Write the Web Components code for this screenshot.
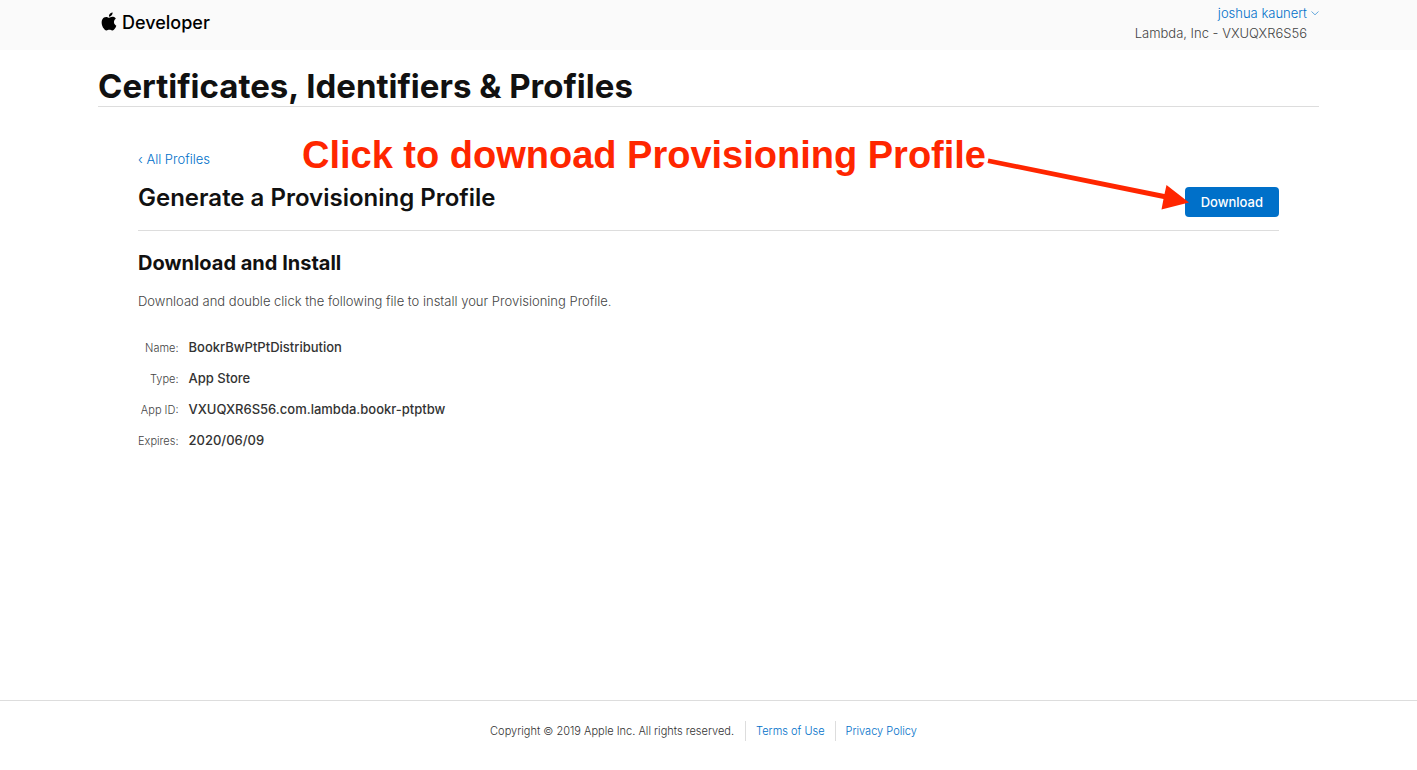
<!DOCTYPE html>
<html lang="en">
<head>
<meta charset="utf-8">
<title>Certificates, Identifiers &amp; Profiles - Apple Developer</title>
<style>
  html { --blue: #0070c9; --line: #ddd; --gutter: 98px; }
  body { margin: 0; background: #fff; color: #333; font: 13px/20px Inter, "Liberation Sans", sans-serif; }
</style>
</head>
<body>
<dev-page>
  <dev-header slot="header" user="joshua kaunert" team="Lambda, Inc - VXUQXR6S56"></dev-header>
  <page-title>Certificates, Identifiers &amp; Profiles</page-title>
  <profile-panel heading="Generate a Provisioning Profile">
    <callout-note slot="note">Click to downoad Provisioning Profile</callout-note>
    <profile-details></profile-details>
  </profile-panel>
  <dev-footer slot="footer"></dev-footer>
</dev-page>
<script>
  function define(name, markup, setup) {
    const template = document.createElement('template');
    template.innerHTML = markup;
    customElements.define(name, class extends HTMLElement {
      connectedCallback() {
        if (this.shadowRoot) return;
        this.attachShadow({ mode: 'open' }).append(template.content.cloneNode(true));
        if (setup) setup(this, this.shadowRoot);
      }
    });
  }

  define('dev-page', `
    <style>
      :host { display: flex; flex-direction: column; min-height: 100vh; }
      main { flex: 1; padding: 16px var(--gutter) 0; }
    </style>
    <slot name="header"></slot>
    <main><slot></slot></main>
    <slot name="footer"></slot>`);

  define('dev-header', `
    <style>
      :host { display: flex; justify-content: space-between; box-sizing: border-box; min-height: 50px; padding: 3px var(--gutter) 0; background: #fafafa; }
      a { color: var(--blue); text-decoration: none; }
      .logo { display: flex; gap: 4px; align-items: center; height: 40px; padding-left: 2px; color: #000; font-size: 18px; font-weight: 500; }
      .logo svg { width: 18px; height: 19px; margin-bottom: 4px; }
      .account { text-align: right; font-weight: 300; }
      .account button { display: flex; align-items: center; gap: 4px; margin-left: auto; padding: 0; border: 0; background: none; color: var(--blue); font: inherit; cursor: pointer; }
      .account svg { width: 8px; height: 6px; }
      .team { padding-right: 12px; color: #444; }
    </style>
    <a class="logo" href="#" aria-label="Apple Developer">
      <svg viewBox="0 0 24 24" fill="currentColor" aria-hidden="true"><path d="M12.152 6.896c-.948 0-2.415-1.078-3.96-1.04-2.04.027-3.91 1.183-4.961 3.014-2.117 3.675-.546 9.103 1.519 12.09 1.013 1.454 2.208 3.09 3.792 3.039 1.52-.065 2.09-.987 3.935-.987 1.831 0 2.35.987 3.96.948 1.637-.026 2.676-1.48 3.676-2.948 1.156-1.688 1.636-3.325 1.662-3.415-.039-.013-3.182-1.221-3.22-4.857-.026-3.04 2.48-4.494 2.597-4.559-1.429-2.09-3.623-2.324-4.39-2.376-2-.156-3.675 1.09-4.61 1.09zM15.53 3.83c.843-1.012 1.4-2.427 1.245-3.83-1.207.052-2.662.805-3.532 1.818-.78.896-1.454 2.338-1.273 3.714 1.338.104 2.715-.688 3.559-1.701"/></svg>
      <span>Developer</span>
    </a>
    <div class="account">
      <button type="button"><span class="user"></span><svg viewBox="0 0 8 6" fill="none" stroke="#68aadd" aria-hidden="true"><path d="M.5 1.500 4 4.800 7.500 1.500"/></svg></button>
      <div class="team"></div>
    </div>`, (host, root) => {
      root.querySelector('.user').textContent = host.getAttribute('user');
      root.querySelector('.team').textContent = host.getAttribute('team');
    });

  define('page-title', `
    <style>
      :host { display: block; border-bottom: 1px solid var(--line); }
      h1 { margin: 0; color: #111; font-size: 33px; line-height: 40px; font-weight: 700; }
    </style>
    <h1><slot></slot></h1>`);

  define('profile-panel', `
    <style>
      :host { display: block; position: relative; padding: 42px 40px 0; }
      .back { color: var(--blue); text-decoration: none; font-weight: 300; }
      .bar { display: flex; justify-content: space-between; align-items: flex-start; padding: 15px 0 13px; border-bottom: 1px solid var(--line); }
      h2 { margin: 0; color: #111; font-size: 24px; line-height: 28px; font-weight: 600; }
      button { height: 30px; margin-top: 3px; padding: 0 16px; border: 0; border-radius: 4px; background: var(--blue); color: #fff; font: 500 13px/20px Inter, "Liberation Sans", sans-serif; cursor: pointer; }
      ::slotted(callout-note) { position: absolute; top: 24px; right: 130px; }
    </style>
    <a class="back" href="#">‹ All Profiles</a>
    <div class="bar"><h2></h2><button type="button">Download</button></div>
    <slot></slot>
    <slot name="note"></slot>`, (host, root) => {
      root.querySelector('h2').textContent = host.getAttribute('heading');
    });

  define('callout-note', `
    <style>
      :host { display: flex; align-items: flex-start; pointer-events: none; color: #ff2600; font: bold 38px/48px "Liberation Sans", Arial, sans-serif; white-space: nowrap; }
      svg { width: 203px; height: 60px; margin-top: 20px; }
    </style>
    <span><slot></slot></span>
    <svg viewBox="0 0 203 60" fill="currentColor" aria-hidden="true"><path d="M2.500 7.500 178.500 43 180.500 34 203 51.500 175.500 58.500 177.500 48 1.500 12Z"/></svg>`);

  define('profile-details', `
    <style>
      :host { display: block; padding-top: 20px; }
      h3 { margin: 0; color: #111; font-size: 20px; line-height: 24px; font-weight: 700; }
      p { margin: 16px 0 26px; color: #444; font-weight: 300; }
      dl { display: grid; grid-template-columns: max-content 1fr; gap: 10px; margin: 0; align-items: baseline; }
      dt { color: #444; font-size: 11px; font-weight: 300; text-align: right; }
      dd { margin: 0; font-weight: 500; }
    </style>
    <h3>Download and Install</h3>
    <p>Download and double click the following file to install your Provisioning Profile.</p>
    <dl>
      <dt>Name:</dt><dd>BookrBwPtPtDistribution</dd>
      <dt>Type:</dt><dd>App Store</dd>
      <dt>App ID:</dt><dd>VXUQXR6S56.com.lambda.bookr-ptptbw</dd>
      <dt>Expires:</dt><dd>2020/06/09</dd>
    </dl>`);

  define('dev-footer', `
    <style>
      :host { display: flex; justify-content: center; padding: 20px 0 29px; border-top: 1px solid var(--line); color: #333; font-size: 11px; font-weight: 300; }
      a { padding: 0 10px; border-left: 1px solid var(--line); color: var(--blue); text-decoration: none; }
      span { padding-right: 11px; }
    </style>
    <span>Copyright © 2019 Apple Inc. All rights reserved.</span>
    <a href="#">Terms of Use</a>
    <a href="#">Privacy Policy</a>`);
</script>
</body>
</html>
